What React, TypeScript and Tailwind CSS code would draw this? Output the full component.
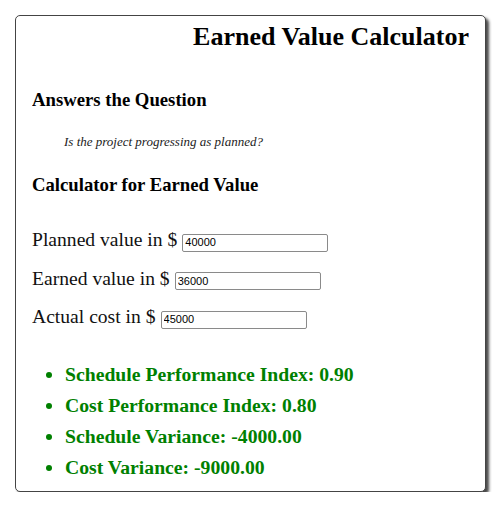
const rows = [
  { label: 'Planned value in $', value: '40000' },
  { label: 'Earned value in $', value: '36000' },
  { label: 'Actual cost in $', value: '45000' },
]

const results = [
  'Schedule Performance Index: 0.90',
  'Cost Performance Index: 0.80',
  'Schedule Variance: -4000.00',
  'Cost Variance: -9000.00',
]

export default function App() {
  return (
    <div className="pt-[15px] pl-[15px] font-['Liberation_Serif',serif] text-black">
      <div className="w-[471px] rounded-[5px] border border-[#444] bg-white px-4 pb-[17px] shadow-[3px_3px_3px_#4a4a4a]">
        <div className="h-[458px] overflow-hidden">
          <h1 className="mt-[6px] text-right text-[26px] leading-[30px] font-bold">
            Earned Value Calculator
          </h1>

          <h3 className="mt-[37px] text-[18.72px] leading-[22px] font-bold">
            Answers the Question
          </h3>
          <p className="mt-[23px] pl-8 text-[13px] leading-[15px] italic text-[#222]">
            Is the project progressing as planned?
          </p>

          <h3 className="mt-[25px] text-[18.72px] leading-[22px] font-bold">
            Calculator for Earned Value
          </h3>

          <div className="mt-[32px] flex flex-col gap-[15px]">
            {rows.map((r) => (
              <div key={r.label} className="flex items-baseline text-[19.6px] leading-[23px] text-[#111]">
                <span>{r.label}</span>
                <input
                  readOnly
                  value={r.value}
                  className="ml-[5px] h-[18px] w-[146px] rounded-[2px] border border-[#8a8a8a] px-[2px] font-['Liberation_Sans',sans-serif] text-[11px] text-black outline-none"
                />
              </div>
            ))}
          </div>

          <ul className="mt-[34px] flex list-disc flex-col gap-[8px] pl-[33px] text-[19.7px] leading-[23px] font-bold text-[#008000] marker:text-[#008000]">
            {results.map((t) => (
              <li key={t}>{t}</li>
            ))}
          </ul>
        </div>
      </div>
    </div>
  )
}
